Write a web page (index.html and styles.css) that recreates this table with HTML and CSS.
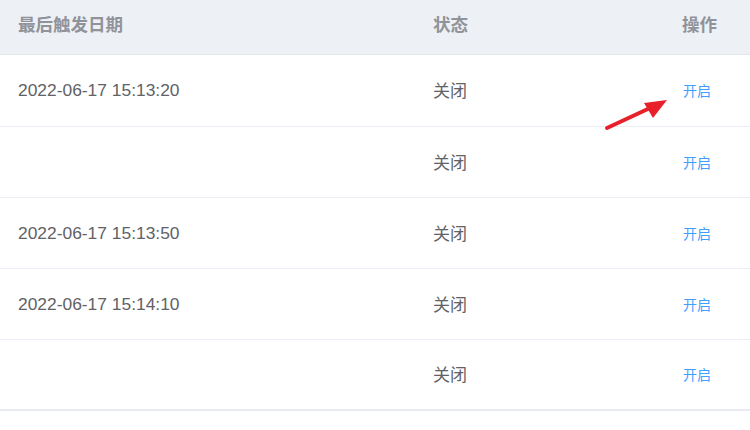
FILE: index.html
```html
<!DOCTYPE html>
<html lang="zh">
<head>
<meta charset="utf-8">
<link rel="stylesheet" href="styles.css">
</head>
<body>
<div class="table">
  <div class="row head">
    <div class="cell zh">最后触发日期</div>
    <div class="cell zh">状态</div>
    <div class="cell zh">操作</div>
  </div>
  <div class="row first">
    <div class="cell">2022-06-17 15:13:20</div>
    <div class="cell zh">关闭</div>
    <div class="cell zh"><a class="btn">开启</a></div>
  </div>
  <div class="row">
    <div class="cell"></div>
    <div class="cell zh">关闭</div>
    <div class="cell zh"><a class="btn">开启</a></div>
  </div>
  <div class="row">
    <div class="cell">2022-06-17 15:13:50</div>
    <div class="cell zh">关闭</div>
    <div class="cell zh"><a class="btn">开启</a></div>
  </div>
  <div class="row">
    <div class="cell">2022-06-17 15:14:10</div>
    <div class="cell zh">关闭</div>
    <div class="cell zh"><a class="btn">开启</a></div>
  </div>
  <div class="row last">
    <div class="cell"></div>
    <div class="cell zh">关闭</div>
    <div class="cell zh"><a class="btn">开启</a></div>
  </div>
  <svg class="arrow" width="80" height="40" viewBox="0 0 80 40">
    <line x1="7" y1="33" x2="50" y2="13" stroke="#e8202a" stroke-width="4" stroke-linecap="round"/>
    <polygon points="67,5 44,8 53,23" fill="#e8202a"/>
  </svg>
</div>
</body>
</html>
```
FILE: styles.css
```css
html, body {
  margin: 0;
  padding: 0;
  background: #fff;
}
.table {
  position: relative;
  width: 750px;
  font-family: "Liberation Sans", "Noto Sans CJK SC", sans-serif;
  font-size: 17.4px;
  color: #606266;
}
.row {
  display: grid;
  grid-template-columns: 415px 249px 86px;
  align-items: center;
  height: 71px;
  box-sizing: border-box;
  border-bottom: 1px solid #ebeef5;
}
.row.first {
  height: 72px;
}
.row.head {
  height: 55px;
  padding-bottom: 8px;
  background: #edf0f5;
  border-bottom-color: #e2e5ea;
  color: #909399;
  font-weight: bold;
}
.row.last {
  border-bottom: 2px solid #e8ebf4;
}
.cell {
  padding-left: 18px;
  white-space: nowrap;
}
.zh {
  font-family: "Noto Sans CJK SC", sans-serif;
  font-size: 17px;
  line-height: 1.2;
}
.head .zh {
  font-size: 17.5px;
}
.btn {
  color: #409eff;
  font-size: 14px;
  padding-left: 1px;
  cursor: pointer;
  position: relative;
  top: -1px;
}
.arrow {
  position: absolute;
  left: 600px;
  top: 95px;
}
```
